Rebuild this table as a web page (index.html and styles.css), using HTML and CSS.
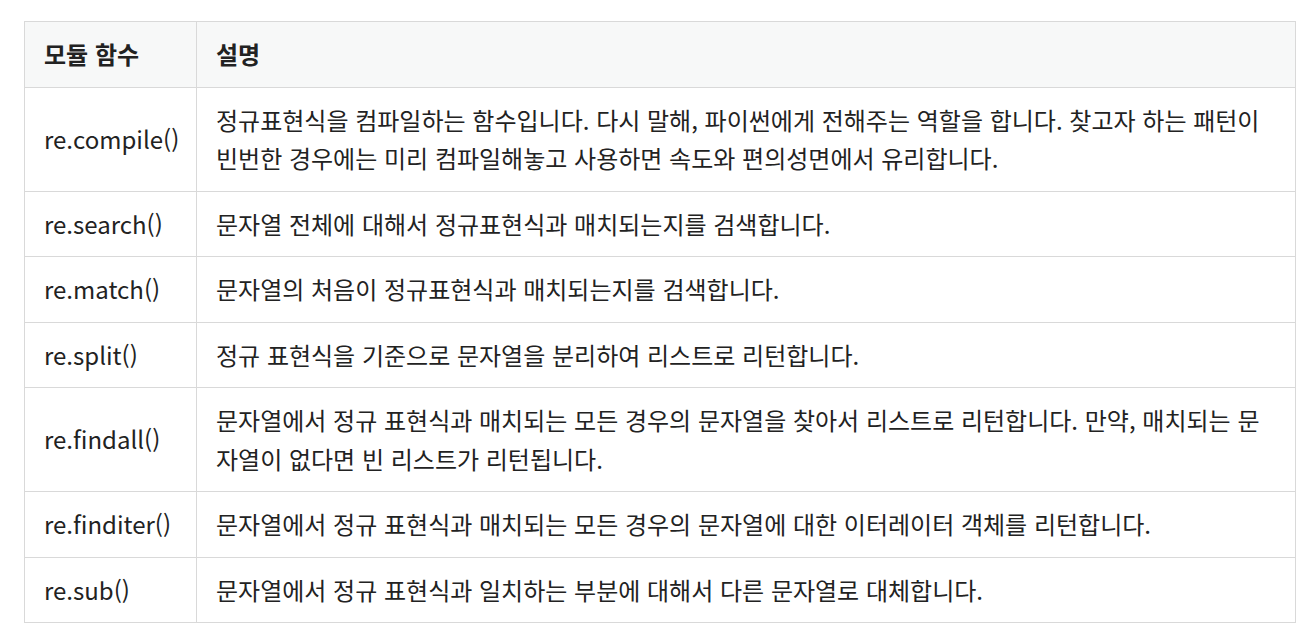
FILE: index.html
```html
<!DOCTYPE html>
<html lang="ko">
<head>
<meta charset="utf-8">
<link rel="stylesheet" href="styles.css">
</head>
<body>
<table class="tbl">
  <colgroup><col class="c1"><col class="c2"></colgroup>
  <thead>
    <tr><th>모듈 함수</th><th>설명</th></tr>
  </thead>
  <tbody>
    <tr><td>re.compile()</td><td>정규표현식을 컴파일하는 함수입니다. 다시 말해, 파이썬에게 전해주는 역할을 합니다. 찾고자 하는 패턴이 빈번한 경우에는 미리 컴파일해놓고 사용하면 속도와 편의성면에서 유리합니다.</td></tr>
    <tr><td>re.search()</td><td>문자열 전체에 대해서 정규표현식과 매치되는지를 검색합니다.</td></tr>
    <tr><td>re.match()</td><td>문자열의 처음이 정규표현식과 매치되는지를 검색합니다.</td></tr>
    <tr><td>re.split()</td><td>정규 표현식을 기준으로 문자열을 분리하여 리스트로 리턴합니다.</td></tr>
    <tr><td>re.findall()</td><td>문자열에서 정규 표현식과 매치되는 모든 경우의 문자열을 찾아서 리스트로 리턴합니다. 만약, 매치되는 문자열이 없다면 빈 리스트가 리턴됩니다.</td></tr>
    <tr><td>re.finditer()</td><td>문자열에서 정규 표현식과 매치되는 모든 경우의 문자열에 대한 이터레이터 객체를 리턴합니다.</td></tr>
    <tr><td>re.sub()</td><td>문자열에서 정규 표현식과 일치하는 부분에 대해서 다른 문자열로 대체합니다.</td></tr>
  </tbody>
</table>
</body>
</html>
```
FILE: styles.css
```css
html, body {
  margin: 0;
  padding: 0;
  background: #fff;
}
body {
  padding: 21px 0 0 24px;
  font-family: "Noto Sans CJK KR", "Noto Sans", sans-serif;
  color: #222;
}
.tbl {
  border-collapse: collapse;
  width: 1272px;
  table-layout: fixed;
  font-size: 24px;
  line-height: 38.5px;
}
.c1 { width: 172px; }
.tbl th, .tbl td {
  border: 1px solid #d9d9d9;
  padding: 13px 19px;
  text-align: left;
  vertical-align: middle;
}
.tbl th {
  background: #f7f8f8;
  font-weight: 700;
}
```
